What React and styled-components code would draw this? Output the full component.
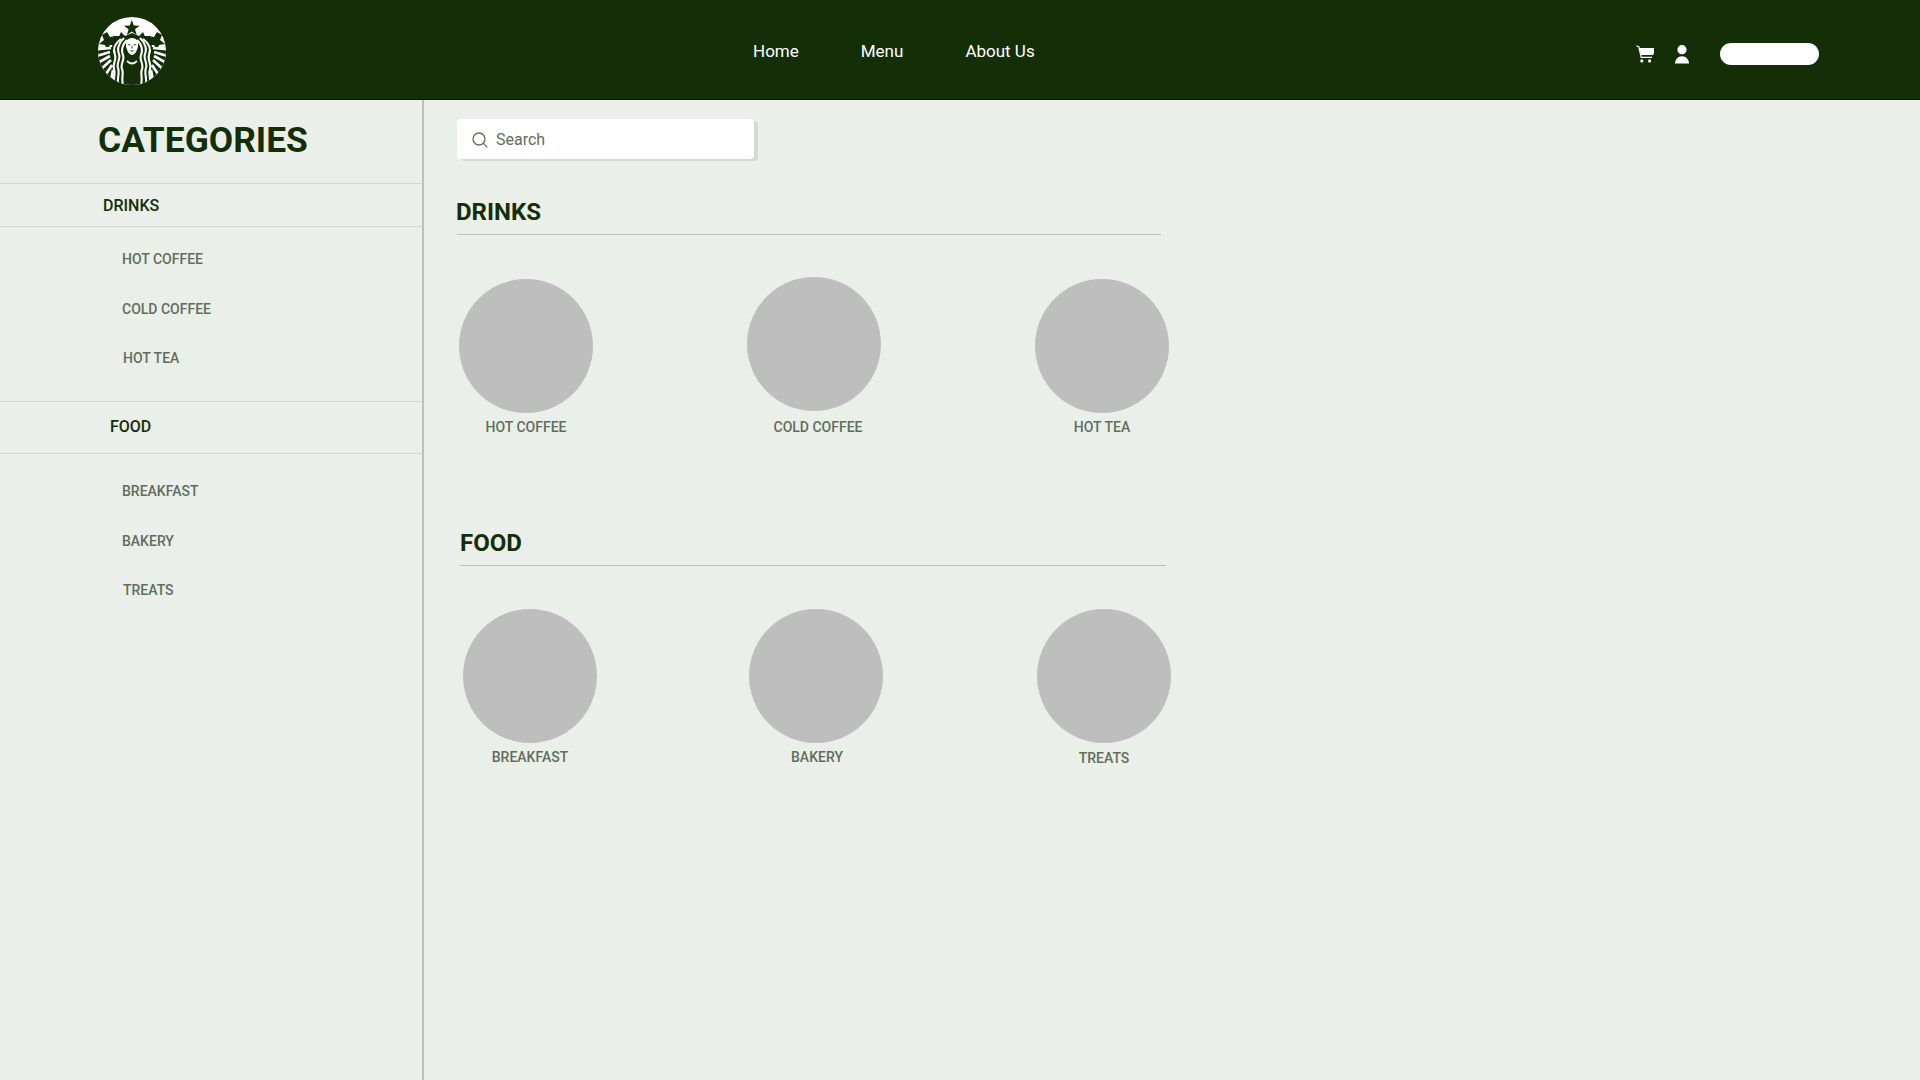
import React from "react";
import styled, { createGlobalStyle } from "styled-components";

const GlobalStyle = createGlobalStyle`
  html, body {
    margin: 0;
    height: 100%;
    background: #ebefea;
    font-family: Roboto, "Liberation Sans", sans-serif;
  }
  * { box-sizing: border-box; }
`;

const Page = styled.div`
  width: 1920px;
  height: 1080px;
  display: flex;
  flex-direction: column;
  overflow: hidden;
`;

const Header = styled.header`
  height: 100px;
  flex: none;
  background: #142e07;
  border-bottom: 1px solid #0b0f08;
  display: flex;
  align-items: center;
  padding: 0 101px 0 98px;
`;

const LogoWrap = styled.div`
  width: 68px;
  height: 68px;
  margin-top: 3px;
  flex: none;
`;

const Nav = styled.nav`
  display: flex;
  gap: 62px;
  margin-left: 587px;
  margin-top: 3px;
`;

const NavLink = styled.a`
  color: #fff;
  font-size: 17px;
  font-weight: 400;
  line-height: 20px;
`;

const HeaderRight = styled.div`
  margin-left: auto;
  display: flex;
  align-items: center;
  margin-top: 9px;
`;

const IconSlot = styled.span`
  display: flex;
  width: ${(p) => p.$w}px;
  margin-right: ${(p) => p.$gap}px;
`;

const Pill = styled.div`
  width: 99px;
  height: 22px;
  border-radius: 11px;
  background: #fff;
`;

const Body = styled.div`
  flex: 1;
  display: flex;
  min-height: 0;
`;

const Sidebar = styled.aside`
  width: 424px;
  flex: none;
  border-right: 2px solid #bdbfbb;
`;

const SideTitle = styled.h1`
  margin: 0;
  height: 84px;
  padding: 18px 0 0 98px;
  font-size: 35.4px;
  line-height: 44px;
  font-weight: 700;
  color: #142e07;
  border-bottom: 1px solid #d3d6d1;
`;

const GroupHead = styled.div`
  height: ${(p) => p.$h}px;
  padding-left: ${(p) => p.$x}px;
  padding-bottom: ${(p) => p.$lift || 0}px;
  display: flex;
  align-items: center;
  font-size: 16px;
  font-weight: 500;
  color: #142e07;
  border-bottom: 1px solid #d3d6d1;
  border-top: ${(p) => (p.$top ? "1px solid #d3d6d1" : "none")};
`;

const SubList = styled.ul`
  list-style: none;
  margin: 0;
  padding: ${(p) => p.$pad}px 0 0;
  height: ${(p) => p.$h}px;
`;

const SubItem = styled.li`
  height: 49.5px;
  padding-left: ${(p) => (p.$nudge ? 123 : 122)}px;
  font-size: 14px;
  line-height: 20px;
  font-weight: 500;
  color: #5f6e5c;
`;

const Main = styled.main`
  flex: 1;
  padding: 19px 0 0 33px;
`;

const SearchBox = styled.div`
  width: 297px;
  height: 40px;
  background: #fff;
  border-radius: 4px;
  box-shadow: 4px 2px 0 #d6d8d3;
  display: flex;
  align-items: center;
  gap: 8px;
  padding: 1px 0 0 15px;
  color: #5f6e5c;
  font-size: 16px;
`;

const Section = styled.section`
  margin-left: ${(p) => p.$x}px;
  margin-top: ${(p) => p.$top}px;
  width: 720px;
`;

const SectionTitle = styled.h2`
  margin: 0;
  width: ${(p) => p.$w}px;
  height: 38px;
  font-size: 24px;
  line-height: 30px;
  font-weight: 700;
  color: #142e07;
  border-bottom: 1px solid #bdbfbb;
`;

const TitleText = styled.span`
  display: inline-block;
  margin-left: ${(p) => p.$pull || 0}px;
`;

const Tiles = styled.div`
  display: flex;
  margin-top: ${(p) => p.$top}px;
`;

const Tile = styled.div`
  width: 134px;
  margin-left: ${(p) => p.$x}px;
  margin-top: ${(p) => p.$y || 0}px;
`;

const Circle = styled.div`
  width: 134px;
  height: 134px;
  border-radius: 50%;
  background: #bebebe;
`;

const TileLabel = styled.div`
  margin-top: ${(p) => 4 + (p.$dy || 0)}px;
  margin-left: ${(p) => (p.$dx || 0) - 20}px;
  margin-right: -20px;
  text-align: center;
  font-size: 14px;
  line-height: 20px;
  font-weight: 500;
  color: #5f6e5c;
`;

const tailLines = [
  "M13 31 L-10 33",
  "M12 35 L-8 41",
  "M12 39 L-5 48.5",
  "M13 43 L0 55",
  "M14 48 L6 60",
  "M15 53 L13 64",
];

const hairLines = [
  "M23 22 C16 27 15 33 17 38 C19 43 14 47 16 52 C18 57 15 60 16 66",
  "M26 21 C20 27 19 32 21 37 C23 42 18 46 20 51 C22 56 19 60 20 68",
  "M29 23 C24 28 23 33 25 38 C27 43 22 47 24 52 C26 57 23 61 25 68",
];

const LogoSide = () => (
  <g fill="none" stroke="#fff">
    <path d="M9 15 L12 20 L18 19 L15 24 L18 28 L12 28 L9 33 L7 28 L1 27 L6 23 L4 18 Z" fill="#142e07" stroke="none" />
    {tailLines.map((d) => (
      <path key={d} d={d} strokeWidth="2.6" />
    ))}
    {hairLines.map((d) => (
      <path key={d} d={d} strokeWidth="2.1" />
    ))}
  </g>
);

const Logo = () => (
  <svg viewBox="0 0 68 68" width="68" height="68">
    <defs>
      <clipPath id="logoDisc">
        <circle cx="34" cy="34" r="34" />
      </clipPath>
    </defs>
    <g clipPath="url(#logoDisc)">
      <rect width="68" height="68" fill="#fff" />
      {/* lower half of the emblem is dark, stripes sit on top */}
      <path d="M0 32 L14 30 L16 18 H52 L54 30 L68 32 V68 H0 Z" fill="#142e07" />
      <path d="M14 20 L20 24 L26 20 H42 L48 24 L54 20 L52 28 H16 Z" fill="#142e07" />
      <path d="M16 19 L21 8 L26 14 L34 15 L42 14 L47 8 L52 19 Z" fill="#fff" />
      <path d="M33.8 3l2 5.6 5.9.1-4.7 3.6 1.7 5.7-4.9-3.4-4.9 3.4 1.7-5.7-4.7-3.6 5.9-.1z" fill="#142e07" />
      <path d="M20 22 L23 15 L27 19 L34 16 L41 19 L45 15 L48 22 Z" fill="#142e07" />
      <LogoSide />
      <g transform="translate(68 0) scale(-1 1)">
        <LogoSide />
      </g>
      {/* face */}
      <path d="M34 21 C29 21 27.5 25 28 29 C28.7 34 31.5 38 34 38 C36.5 38 39.3 34 40 29 C40.5 25 39 21 34 21Z" fill="#fff" />
      <path d="M29.8 27.6 L32.4 28 M35.6 28 L38.2 27.6 M32.4 33.6 Q34 34.6 35.6 33.6 M34 29 V31.6" stroke="#142e07" strokeWidth="0.9" fill="none" />
      <path d="M29 44 Q34 49 39 44" stroke="#fff" strokeWidth="1.8" fill="none" />
    </g>
  </svg>
);

const CartIcon = () => (
  <svg viewBox="0 0 18 18" width="18" height="18">
    <path d="M0.4 0.8 L2.8 1.8 L5.2 12.4 H16" fill="none" stroke="#fff" strokeWidth="1.2" />
    <path d="M3.4 3 H18 V7.4 C18 9 17.2 10 15.8 10 H5 Z" fill="#fff" />
    <circle cx="5.8" cy="15.9" r="1.6" fill="#fff" />
    <circle cx="13.6" cy="15.9" r="1.6" fill="#fff" />
  </svg>
);

const UserIcon = () => (
  <svg viewBox="0 0 14 19" width="14" height="19">
    <circle cx="7" cy="4.7" r="4.6" fill="#fff" />
    <path d="M0 18.5 C0 14.5 3 11.2 7 11.2 C11 11.2 14 14.5 14 18.5 Z" fill="#fff" />
  </svg>
);

const SearchIcon = () => (
  <svg viewBox="0 0 16 16" width="16" height="16" fill="none" stroke="#5f6e5c" strokeWidth="1.3">
    <circle cx="7" cy="7" r="6" />
    <path d="M11.4 11.4 L15.4 15.4" />
  </svg>
);

const sideGroups = [
  {
    name: "DRINKS",
    x: 103,
    h: 43,
    pad: 22,
    listH: 174,
    items: [{ name: "HOT COFFEE" }, { name: "COLD COFFEE" }, { name: "HOT TEA", nudge: true }],
  },
  {
    name: "FOOD",
    x: 110,
    h: 53,
    lift: 2,
    top: true,
    pad: 27,
    listH: 200,
    items: [{ name: "BREAKFAST" }, { name: "BAKERY" }, { name: "TREATS", nudge: true }],
  },
];

function App() {
  return (
    <Page>
      <GlobalStyle />
      <Header>
        <LogoWrap>
          <Logo />
        </LogoWrap>
        <Nav>
          <NavLink>Home</NavLink>
          <NavLink>Menu</NavLink>
          <NavLink>About Us</NavLink>
        </Nav>
        <HeaderRight>
          <IconSlot $w={18} $gap={21}>
            <CartIcon />
          </IconSlot>
          <IconSlot $w={14} $gap={31}>
            <UserIcon />
          </IconSlot>
          <Pill />
        </HeaderRight>
      </Header>
      <Body>
        <Sidebar>
          <SideTitle>CATEGORIES</SideTitle>
          {sideGroups.map((group) => (
            <div key={group.name}>
              <GroupHead $h={group.h} $x={group.x} $top={group.top} $lift={group.lift}>
                {group.name}
              </GroupHead>
              <SubList $h={group.listH} $pad={group.pad}>
                {group.items.map((item) => (
                  <SubItem key={item.name} $nudge={item.nudge}>
                    {item.name}
                  </SubItem>
                ))}
              </SubList>
            </div>
          ))}
        </Sidebar>
        <Main>
          <SearchBox>
            <SearchIcon />
            Search
          </SearchBox>
          <Section $x={0} $top={38}>
            <SectionTitle $w={704}>
              <TitleText $pull={-1}>DRINKS</TitleText>
            </SectionTitle>
            <Tiles $top={42}>
              <Tile $x={2} $y={2}>
                <Circle />
                <TileLabel>HOT COFFEE</TileLabel>
              </Tile>
              <Tile $x={154}>
                <Circle />
                <TileLabel $dx={8} $dy={2}>COLD COFFEE</TileLabel>
              </Tile>
              <Tile $x={154} $y={2}>
                <Circle />
                <TileLabel>HOT TEA</TileLabel>
              </Tile>
            </Tiles>
          </Section>
          <Section $x={3} $top={91}>
            <SectionTitle $w={706}>FOOD</SectionTitle>
            <Tiles $top={43}>
              <Tile $x={3}>
                <Circle />
                <TileLabel>BREAKFAST</TileLabel>
              </Tile>
              <Tile $x={152}>
                <Circle />
                <TileLabel $dx={2}>BAKERY</TileLabel>
              </Tile>
              <Tile $x={154}>
                <Circle />
                <TileLabel $dy={1}>TREATS</TileLabel>
              </Tile>
            </Tiles>
          </Section>
        </Main>
      </Body>
    </Page>
  );
}

export default App;
